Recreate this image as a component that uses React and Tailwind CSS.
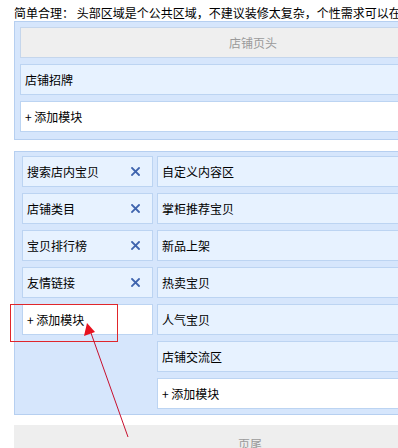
import React from "react";

const leftItems = ["搜索店内宝贝", "店铺类目", "宝贝排行榜", "友情链接"];
const rightItems = ["自定义内容区", "掌柜推荐宝贝", "新品上架", "热卖宝贝", "人气宝贝", "店铺交流区"];

const font = { fontFamily: '"Noto Sans CJK SC", "Noto Sans", sans-serif' };

const CloseIcon = () => (
  <svg width="9" height="9" viewBox="0 0 9 9" className="shrink-0">
    <path d="M1 1 L8 8 M8 1 L1 8" stroke="#3f64ae" strokeWidth="1.8" strokeLinecap="square" />
  </svg>
);

const Item = ({ children, white, removable }) => (
  <div
    className={`h-[31px] flex items-center justify-between pl-[4px] pr-[12px] border border-[#bcd4f2] text-[12px] text-black ${
      white ? "bg-white" : "bg-[#e7f2ff]"
    }`}
  >
    <span>{children}</span>
    {removable && <CloseIcon />}
  </div>
);

const App = () => {
  return (
    <div className="relative w-[398px] h-[448px] overflow-hidden bg-white" style={font}>
      <div className="h-[21px] pt-[4px] pl-[14px] text-[12px] leading-[17px] text-black whitespace-nowrap">
        简单合理： 头部区域是个公共区域，不建议装修太复杂，个性需求可以在
      </div>

      {/* head panel */}
      <div className="ml-[14px] w-[478px] border border-[#b6cff0] bg-[#d6e6fc] pt-[5px] pb-[7px] pl-[5px] pr-[5px] flex flex-col gap-[6px]">
        <div className="h-[31px] flex items-center justify-center border border-[#c5d6ec] bg-[#efefef] text-[12px] text-[#9a9a9a]">
          店铺页头
        </div>
        <Item>店铺招牌</Item>
        <Item white>+ 添加模块</Item>
      </div>

      {/* body panel */}
      <div className="ml-[14px] mt-[11px] w-[478px] border border-[#b6cff0] bg-[#d6e6fc] pt-[4px] pb-[5px] pl-[7px] pr-[5px] flex gap-[4px]">
        <div className="w-[131px] flex flex-col gap-[6px]">
          {leftItems.map((t) => (
            <Item key={t} removable>
              {t}
            </Item>
          ))}
          <Item white>+ 添加模块</Item>
        </div>
        <div className="flex-1 flex flex-col gap-[6px]">
          {rightItems.map((t) => (
            <Item key={t}>{t}</Item>
          ))}
          <Item white>+ 添加模块</Item>
        </div>
      </div>

      {/* footer */}
      <div className="ml-[14px] mt-[10px] w-[472px] h-[40px] bg-[#eeeeee] flex justify-center pt-[10px] text-[12px] text-[#9a9a9a]">
        页尾
      </div>

      {/* highlight and arrow */}
      <div className="absolute left-[10px] top-[304px] w-[108px] h-[38px] border border-[#e0262b]" />
      <svg className="absolute left-0 top-0 pointer-events-none" width="398" height="448">
        <line x1="128" y1="437" x2="91" y2="333" stroke="#c8102e" strokeWidth="1" />
        <polygon points="87,323 84,336 95,332" fill="#e8121f" />
      </svg>
    </div>
  );
};

export default App;
